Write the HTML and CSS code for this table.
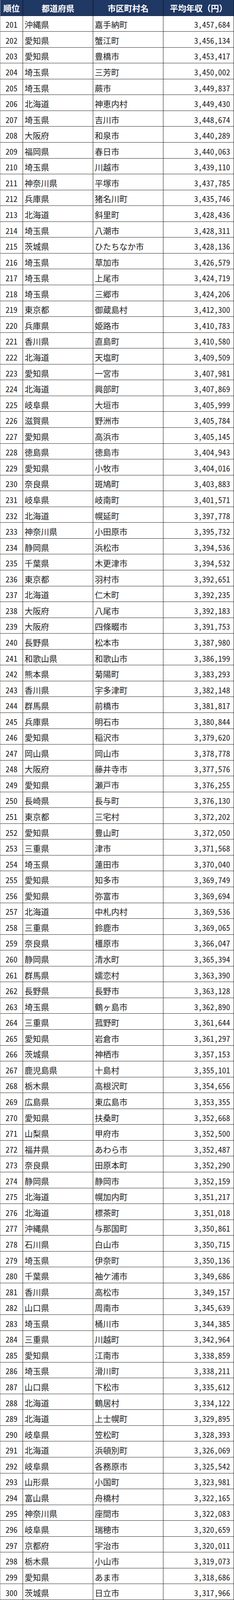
FILE: index.html
```html
<!DOCTYPE html>
<html lang="ja">
<head>
<meta charset="utf-8">
<title>平均年収ランキング</title>
<link rel="stylesheet" href="styles.css">
</head>
<body>
<div class="table">
<div class="c h">順位</div><div class="c h">都道府県</div><div class="c h">市区町村名</div><div class="c h">平均年収（円）</div>
<div class="c r">201</div><div class="c p">沖縄県</div><div class="c p">嘉手納町</div><div class="c v">3,457,684</div>
<div class="c r">202</div><div class="c p">愛知県</div><div class="c p">蟹江町</div><div class="c v">3,456,134</div>
<div class="c r">203</div><div class="c p">愛知県</div><div class="c p">豊橋市</div><div class="c v">3,453,417</div>
<div class="c r">204</div><div class="c p">埼玉県</div><div class="c p">三芳町</div><div class="c v">3,450,002</div>
<div class="c r">205</div><div class="c p">埼玉県</div><div class="c p">蕨市</div><div class="c v">3,449,837</div>
<div class="c r">206</div><div class="c p">北海道</div><div class="c p">神恵内村</div><div class="c v">3,449,430</div>
<div class="c r">207</div><div class="c p">埼玉県</div><div class="c p">吉川市</div><div class="c v">3,448,674</div>
<div class="c r">208</div><div class="c p">大阪府</div><div class="c p">和泉市</div><div class="c v">3,440,289</div>
<div class="c r">209</div><div class="c p">福岡県</div><div class="c p">春日市</div><div class="c v">3,440,063</div>
<div class="c r">210</div><div class="c p">埼玉県</div><div class="c p">川越市</div><div class="c v">3,439,110</div>
<div class="c r">211</div><div class="c p">神奈川県</div><div class="c p">平塚市</div><div class="c v">3,437,785</div>
<div class="c r">212</div><div class="c p">兵庫県</div><div class="c p">猪名川町</div><div class="c v">3,435,746</div>
<div class="c r">213</div><div class="c p">北海道</div><div class="c p">斜里町</div><div class="c v">3,428,436</div>
<div class="c r">214</div><div class="c p">埼玉県</div><div class="c p">八潮市</div><div class="c v">3,428,311</div>
<div class="c r">215</div><div class="c p">茨城県</div><div class="c p">ひたちなか市</div><div class="c v">3,428,136</div>
<div class="c r">216</div><div class="c p">埼玉県</div><div class="c p">草加市</div><div class="c v">3,426,579</div>
<div class="c r">217</div><div class="c p">埼玉県</div><div class="c p">上尾市</div><div class="c v">3,424,719</div>
<div class="c r">218</div><div class="c p">埼玉県</div><div class="c p">三郷市</div><div class="c v">3,424,206</div>
<div class="c r">219</div><div class="c p">東京都</div><div class="c p">御蔵島村</div><div class="c v">3,412,300</div>
<div class="c r">220</div><div class="c p">兵庫県</div><div class="c p">姫路市</div><div class="c v">3,410,783</div>
<div class="c r">221</div><div class="c p">香川県</div><div class="c p">直島町</div><div class="c v">3,410,580</div>
<div class="c r">222</div><div class="c p">北海道</div><div class="c p">天塩町</div><div class="c v">3,409,509</div>
<div class="c r">223</div><div class="c p">愛知県</div><div class="c p">一宮市</div><div class="c v">3,407,981</div>
<div class="c r">224</div><div class="c p">北海道</div><div class="c p">興部町</div><div class="c v">3,407,869</div>
<div class="c r">225</div><div class="c p">岐阜県</div><div class="c p">大垣市</div><div class="c v">3,405,999</div>
<div class="c r">226</div><div class="c p">滋賀県</div><div class="c p">野洲市</div><div class="c v">3,405,784</div>
<div class="c r">227</div><div class="c p">愛知県</div><div class="c p">高浜市</div><div class="c v">3,405,145</div>
<div class="c r">228</div><div class="c p">徳島県</div><div class="c p">徳島市</div><div class="c v">3,404,943</div>
<div class="c r">229</div><div class="c p">愛知県</div><div class="c p">小牧市</div><div class="c v">3,404,016</div>
<div class="c r">230</div><div class="c p">奈良県</div><div class="c p">斑鳩町</div><div class="c v">3,403,883</div>
<div class="c r">231</div><div class="c p">岐阜県</div><div class="c p">岐南町</div><div class="c v">3,401,571</div>
<div class="c r">232</div><div class="c p">北海道</div><div class="c p">幌延町</div><div class="c v">3,397,778</div>
<div class="c r">233</div><div class="c p">神奈川県</div><div class="c p">小田原市</div><div class="c v">3,395,732</div>
<div class="c r">234</div><div class="c p">静岡県</div><div class="c p">浜松市</div><div class="c v">3,394,536</div>
<div class="c r">235</div><div class="c p">千葉県</div><div class="c p">木更津市</div><div class="c v">3,394,532</div>
<div class="c r">236</div><div class="c p">東京都</div><div class="c p">羽村市</div><div class="c v">3,392,651</div>
<div class="c r">237</div><div class="c p">北海道</div><div class="c p">仁木町</div><div class="c v">3,392,235</div>
<div class="c r">238</div><div class="c p">大阪府</div><div class="c p">八尾市</div><div class="c v">3,392,183</div>
<div class="c r">239</div><div class="c p">大阪府</div><div class="c p">四條畷市</div><div class="c v">3,391,753</div>
<div class="c r">240</div><div class="c p">長野県</div><div class="c p">松本市</div><div class="c v">3,387,980</div>
<div class="c r">241</div><div class="c p">和歌山県</div><div class="c p">和歌山市</div><div class="c v">3,386,199</div>
<div class="c r">242</div><div class="c p">熊本県</div><div class="c p">菊陽町</div><div class="c v">3,383,293</div>
<div class="c r">243</div><div class="c p">香川県</div><div class="c p">宇多津町</div><div class="c v">3,382,148</div>
<div class="c r">244</div><div class="c p">群馬県</div><div class="c p">前橋市</div><div class="c v">3,381,817</div>
<div class="c r">245</div><div class="c p">兵庫県</div><div class="c p">明石市</div><div class="c v">3,380,844</div>
<div class="c r">246</div><div class="c p">愛知県</div><div class="c p">稲沢市</div><div class="c v">3,379,620</div>
<div class="c r">247</div><div class="c p">岡山県</div><div class="c p">岡山市</div><div class="c v">3,378,778</div>
<div class="c r">248</div><div class="c p">大阪府</div><div class="c p">藤井寺市</div><div class="c v">3,377,576</div>
<div class="c r">249</div><div class="c p">愛知県</div><div class="c p">瀬戸市</div><div class="c v">3,376,255</div>
<div class="c r">250</div><div class="c p">長崎県</div><div class="c p">長与町</div><div class="c v">3,376,130</div>
<div class="c r">251</div><div class="c p">東京都</div><div class="c p">三宅村</div><div class="c v">3,372,202</div>
<div class="c r">252</div><div class="c p">愛知県</div><div class="c p">豊山町</div><div class="c v">3,372,050</div>
<div class="c r">253</div><div class="c p">三重県</div><div class="c p">津市</div><div class="c v">3,371,568</div>
<div class="c r">254</div><div class="c p">埼玉県</div><div class="c p">蓮田市</div><div class="c v">3,370,040</div>
<div class="c r">255</div><div class="c p">愛知県</div><div class="c p">知多市</div><div class="c v">3,369,749</div>
<div class="c r">256</div><div class="c p">愛知県</div><div class="c p">弥富市</div><div class="c v">3,369,694</div>
<div class="c r">257</div><div class="c p">北海道</div><div class="c p">中札内村</div><div class="c v">3,369,536</div>
<div class="c r">258</div><div class="c p">三重県</div><div class="c p">鈴鹿市</div><div class="c v">3,369,065</div>
<div class="c r">259</div><div class="c p">奈良県</div><div class="c p">橿原市</div><div class="c v">3,366,047</div>
<div class="c r">260</div><div class="c p">静岡県</div><div class="c p">清水町</div><div class="c v">3,365,394</div>
<div class="c r">261</div><div class="c p">群馬県</div><div class="c p">嬬恋村</div><div class="c v">3,363,390</div>
<div class="c r">262</div><div class="c p">長野県</div><div class="c p">長野市</div><div class="c v">3,363,128</div>
<div class="c r">263</div><div class="c p">埼玉県</div><div class="c p">鶴ヶ島市</div><div class="c v">3,362,890</div>
<div class="c r">264</div><div class="c p">三重県</div><div class="c p">菰野町</div><div class="c v">3,361,644</div>
<div class="c r">265</div><div class="c p">愛知県</div><div class="c p">岩倉市</div><div class="c v">3,361,297</div>
<div class="c r">266</div><div class="c p">茨城県</div><div class="c p">神栖市</div><div class="c v">3,357,153</div>
<div class="c r">267</div><div class="c p">鹿児島県</div><div class="c p">十島村</div><div class="c v">3,355,101</div>
<div class="c r">268</div><div class="c p">栃木県</div><div class="c p">高根沢町</div><div class="c v">3,354,656</div>
<div class="c r">269</div><div class="c p">広島県</div><div class="c p">東広島市</div><div class="c v">3,353,355</div>
<div class="c r">270</div><div class="c p">愛知県</div><div class="c p">扶桑町</div><div class="c v">3,352,668</div>
<div class="c r">271</div><div class="c p">山梨県</div><div class="c p">甲府市</div><div class="c v">3,352,500</div>
<div class="c r">272</div><div class="c p">福井県</div><div class="c p">あわら市</div><div class="c v">3,352,487</div>
<div class="c r">273</div><div class="c p">奈良県</div><div class="c p">田原本町</div><div class="c v">3,352,290</div>
<div class="c r">274</div><div class="c p">静岡県</div><div class="c p">静岡市</div><div class="c v">3,352,159</div>
<div class="c r">275</div><div class="c p">北海道</div><div class="c p">幌加内町</div><div class="c v">3,351,217</div>
<div class="c r">276</div><div class="c p">北海道</div><div class="c p">標茶町</div><div class="c v">3,351,018</div>
<div class="c r">277</div><div class="c p">沖縄県</div><div class="c p">与那国町</div><div class="c v">3,350,861</div>
<div class="c r">278</div><div class="c p">石川県</div><div class="c p">白山市</div><div class="c v">3,350,715</div>
<div class="c r">279</div><div class="c p">埼玉県</div><div class="c p">伊奈町</div><div class="c v">3,350,136</div>
<div class="c r">280</div><div class="c p">千葉県</div><div class="c p">袖ケ浦市</div><div class="c v">3,349,686</div>
<div class="c r">281</div><div class="c p">香川県</div><div class="c p">高松市</div><div class="c v">3,349,157</div>
<div class="c r">282</div><div class="c p">山口県</div><div class="c p">周南市</div><div class="c v">3,345,639</div>
<div class="c r">283</div><div class="c p">埼玉県</div><div class="c p">桶川市</div><div class="c v">3,344,385</div>
<div class="c r">284</div><div class="c p">三重県</div><div class="c p">川越町</div><div class="c v">3,342,964</div>
<div class="c r">285</div><div class="c p">愛知県</div><div class="c p">江南市</div><div class="c v">3,338,859</div>
<div class="c r">286</div><div class="c p">埼玉県</div><div class="c p">滑川町</div><div class="c v">3,338,211</div>
<div class="c r">287</div><div class="c p">山口県</div><div class="c p">下松市</div><div class="c v">3,335,612</div>
<div class="c r">288</div><div class="c p">北海道</div><div class="c p">鶴居村</div><div class="c v">3,334,122</div>
<div class="c r">289</div><div class="c p">北海道</div><div class="c p">上士幌町</div><div class="c v">3,329,895</div>
<div class="c r">290</div><div class="c p">岐阜県</div><div class="c p">笠松町</div><div class="c v">3,328,393</div>
<div class="c r">291</div><div class="c p">北海道</div><div class="c p">浜頓別町</div><div class="c v">3,326,069</div>
<div class="c r">292</div><div class="c p">岐阜県</div><div class="c p">各務原市</div><div class="c v">3,325,542</div>
<div class="c r">293</div><div class="c p">山形県</div><div class="c p">小国町</div><div class="c v">3,323,981</div>
<div class="c r">294</div><div class="c p">富山県</div><div class="c p">舟橋村</div><div class="c v">3,322,165</div>
<div class="c r">295</div><div class="c p">神奈川県</div><div class="c p">座間市</div><div class="c v">3,322,083</div>
<div class="c r">296</div><div class="c p">岐阜県</div><div class="c p">瑞穂市</div><div class="c v">3,320,659</div>
<div class="c r">297</div><div class="c p">京都府</div><div class="c p">宇治市</div><div class="c v">3,320,011</div>
<div class="c r">298</div><div class="c p">栃木県</div><div class="c p">小山市</div><div class="c v">3,319,073</div>
<div class="c r">299</div><div class="c p">愛知県</div><div class="c p">あま市</div><div class="c v">3,318,686</div>
<div class="c r">300</div><div class="c p">茨城県</div><div class="c p">日立市</div><div class="c v">3,317,966</div>
</div>
</body>
</html>
```
FILE: styles.css
```css
html, body {
  margin: 0;
  padding: 0;
  background: #ffffff;
}
.table {
  display: grid;
  grid-template-columns: 59px 180px 180px 181px;
  grid-template-rows: repeat(101, 1fr);
  width: 600px;
  height: 100vh;
  overflow: hidden;
  font-family: "Noto Sans CJK JP", "Noto Sans", sans-serif;
  color: #1e1e1e;
}
.c {
  display: flex;
  align-items: center;
  min-height: 0;
  min-width: 0;
  box-sizing: border-box;
  border-right: 1px solid #1a1a1a;
  border-bottom: 1px solid #2a2a2a;
  font-size: 21px;
  line-height: 24px;
  padding-top: 4px;
  overflow: hidden;
  white-space: nowrap;
}
.c:nth-child(4n+1) {
  border-left: 1px solid #9a9a9a;
}
.h {
  background: #1f3864;
  color: #ffffff;
  font-weight: bold;
  justify-content: center;
  font-size: 21px;
  padding-top: 0;
  border-right-color: #0d0d0d;
  border-bottom-color: #1a1a1a;
}
.r {
  justify-content: center;
  font-feature-settings: "hwid" 1;
  font-size: 20.5px;
}
.p {
  padding-left: 4px;
}
.v {
  justify-content: flex-end;
  padding-right: 9px;
  font-feature-settings: "hwid" 1;
  font-size: 20.5px;
}
```
